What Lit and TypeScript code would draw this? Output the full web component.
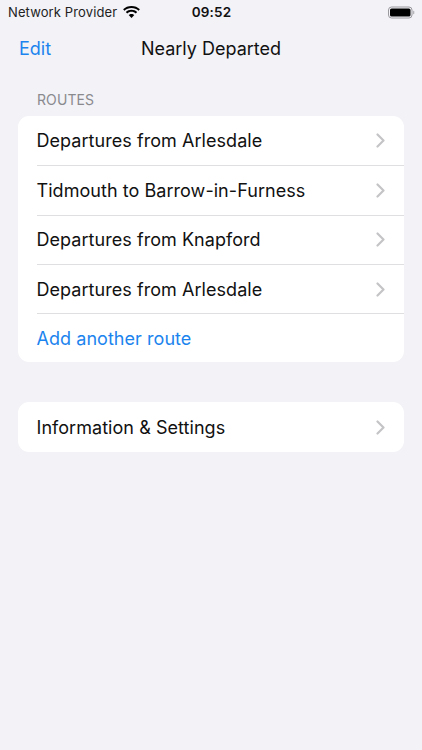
import { LitElement, html, css, svg } from "lit";
import { customElement } from "lit/decorators.js";

const chevron = svg`<path d="M1.5 1.5 L7.5 7.5 L1.5 13.5" fill="none" stroke="#c4c4c7" stroke-width="2.2" stroke-linecap="round" stroke-linejoin="round"/>`;

@customElement("app-root")
export class AppRoot extends LitElement {
  static styles = css`
    :host {
      display: block;
      width: 422px;
      height: 750px;
      background: #f2f2f7;
      font-family: Inter, "Liberation Sans", sans-serif;
      color: #111;
      overflow: hidden;
    }
    .status {
      height: 24px;
      display: grid;
      grid-template-columns: 1fr auto 1fr;
      align-items: center;
      padding: 0 7px 0 8px;
      font-size: 13px;
      letter-spacing: 0.12px;
      color: #222;
    }
    .status-left {
      display: flex;
      align-items: center;
      gap: 6px;
    }
    .time {
      font-weight: 600;
      font-size: 13.5px;
      color: #111;
    }
    .battery {
      justify-self: end;
      display: block;
    }
    .nav {
      height: 48px;
      display: grid;
      grid-template-columns: 1fr auto 1fr;
      align-items: center;
      padding: 0 19px;
      font-size: 18px;
    }
    .edit {
      color: #1c84ee;
    }
    .section-label {
      margin: 18px 0 0 37px;
      height: 20px;
      line-height: 20px;
      font-size: 14px;
      letter-spacing: 0.1px;
      color: #8a8a8e;
    }
    .card {
      margin: 0 18px;
      background: #fff;
      border-radius: 11px;
    }
    .routes {
      margin-top: 6px;
    }
    .settings {
      margin-top: 40px;
    }
    .row {
      box-sizing: border-box;
      height: 49.3px;
      margin-left: 18.5px;
      padding-right: 19px;
      display: flex;
      align-items: center;
      justify-content: space-between;
      font-size: 18px;
      letter-spacing: 0.05px;
    }
    .row + .row {
      border-top: 1px solid #dfdfe1;
    }
    .row svg {
      display: block;
    }
    .add {
      color: #1c84ee;
    }
  `;

  private row(label: string) {
    return html`<div class="row">
      <span>${label}</span>
      <svg width="9" height="15" viewBox="0 0 9 15">${chevron}</svg>
    </div>`;
  }

  render() {
    return html`
      <div class="status">
        <div class="status-left">
          <span>Network Provider</span>
          <svg width="17" height="12" viewBox="1 0.6 15 10.8" preserveAspectRatio="none">
            <path d="M8.5 2.4c2.4 0 4.6.9 6.2 2.5l1.2-1.3C14 1.7 11.4.6 8.5.6S3 1.7 1.1 3.6l1.2 1.3C3.9 3.3 6.1 2.4 8.5 2.4z" fill="#000"/>
            <path d="M8.5 5.8c1.4 0 2.8.5 3.8 1.5l1.2-1.3C12.2 4.7 10.4 4 8.5 4s-3.7.7-5 2l1.2 1.3c1-1 2.4-1.5 3.8-1.5z" fill="#000"/>
            <path d="M8.5 11.4l2.5-2.6c-.6-.7-1.5-1.1-2.5-1.1s-1.9.4-2.5 1.1z" fill="#000"/>
          </svg>
        </div>
        <span class="time">09:52</span>
        <svg class="battery" width="27" height="13" viewBox="0 0 27 13">
          <rect x="0.5" y="1" width="23.5" height="11" rx="3" fill="none" stroke="#9a9a9e"/>
          <rect x="2" y="2.5" width="20.5" height="8" rx="1.6" fill="#000"/>
          <rect x="25" y="4.8" width="1.3" height="3.4" rx="0.6" fill="#b5b5b8"/>
        </svg>
      </div>
      <div class="nav">
        <span class="edit">Edit</span>
        <span>Nearly Departed</span>
        <span></span>
      </div>
      <div class="section-label">ROUTES</div>
      <div class="card routes">
        ${this.row("Departures from Arlesdale")}
        ${this.row("Tidmouth to Barrow-in-Furness")}
        ${this.row("Departures from Knapford")}
        ${this.row("Departures from Arlesdale")}
        <div class="row add"><span>Add another route</span></div>
      </div>
      <div class="card settings">
        ${this.row("Information & Settings")}
      </div>
    `;
  }
}
